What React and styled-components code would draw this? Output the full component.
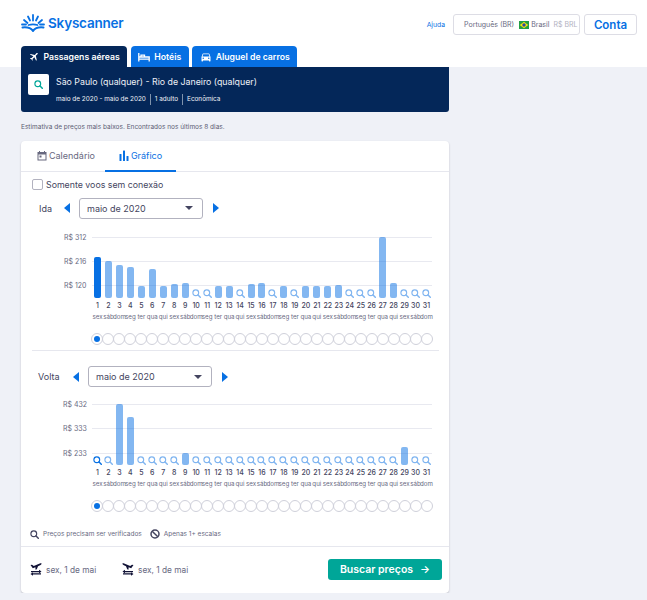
import React from 'react';
import styled, { createGlobalStyle } from 'styled-components';
import { MdDirectionsCar, MdFlight } from 'react-icons/md';

const Global = createGlobalStyle`
  html, body { margin: 0; padding: 0; background: #eff1f7; }
  body { font-family: Inter, "Noto Sans", sans-serif; color: #444560; overflow: hidden; }
  * { box-sizing: border-box; }
`;

const Header = styled.header`
  background: #fff;
  height: 67px;
  padding: 13px 10px 0 21px;
`;

const TopRow = styled.div`
  display: flex;
  align-items: flex-start;
  justify-content: space-between;
  height: 33px;
`;

const Logo = styled.div`
  display: flex;
  align-items: center;
  gap: 3px;
  height: 20px;
  color: #0770e3;
  font-size: 13.5px;
  font-weight: 600;
  letter-spacing: -0.2px;
`;

const TopActions = styled.div`
  display: flex;
  align-items: center;
  margin-top: 1px;
`;

const Help = styled.a`
  color: #0770e3;
  font-size: 6.8px;
  margin-right: 8px;
`;

const LocaleButton = styled.div`
  display: flex;
  align-items: center;
  width: 127px;
  height: 21px;
  padding-left: 10px;
  border: 1px solid #dddde5;
  border-radius: 3px;
  font-size: 7px;
  color: #68697f;
  margin-right: 4px;
  white-space: nowrap;
  span { margin-right: 5px; }
  em { font-style: normal; color: #b2b2bf; margin-left: 4px; }
  svg { margin-right: 2px; flex: none; }
`;

const AccountButton = styled.div`
  display: flex;
  align-items: center;
  justify-content: center;
  width: 53px;
  height: 21px;
  border: 1px solid #dddde5;
  border-radius: 3px;
  color: #0770e3;
  font-size: 11.5px;
  font-weight: 600;
`;

const Tabs = styled.nav`
  display: flex;
  gap: 3.5px;
`;

const Tab = styled.div`
  display: flex;
  align-items: center;
  gap: 4px;
  height: 21px;
  padding: 0 7.5px;
  border-radius: 4px 4px 0 0;
  background: ${p => (p.$active ? '#042759' : '#0770e3')};
  color: #fff;
  font-size: 8.7px;
  font-weight: 600;
  white-space: nowrap;
  svg { flex: none; }
`;

const PlaneIcon = styled(MdFlight)`
  transform: rotate(45deg);
`;

const Main = styled.main`
  width: 428px;
  margin-left: 21px;
`;

const Banner = styled.section`
  display: flex;
  gap: 7px;
  height: 45px;
  padding: 7px;
  background: #042759;
  border-radius: 0 0 3px 3px;
  color: #fff;
`;

const SearchBox = styled.div`
  display: flex;
  align-items: center;
  justify-content: center;
  width: 21px;
  height: 21px;
  background: #fff;
  border-radius: 2px;
  color: #00a698;
`;

const Route = styled.div`
  margin-top: 1px;
  font-size: 8.8px;
  line-height: 14px;
  color: #eef0f6;
  white-space: nowrap;
`;

const Meta = styled.div`
  display: flex;
  margin-top: 5px;
  font-size: 6.4px;
  line-height: 11px;
  color: #f1f3f8;
  white-space: nowrap;
  span + span { margin-left: 4px; padding-left: 4px; border-left: 1px solid #7f93ac; }
`;

const Note = styled.p`
  margin: 11px 0 9px;
  font-size: 6.5px;
  line-height: 9px;
  color: #5b5c73;
`;

const Card = styled.section`
  height: 452px;
  background: #fff;
  border-radius: 4px;
  box-shadow: 0 1px 2px rgba(37, 32, 51, 0.25);
`;

const CardTabs = styled.div`
  display: flex;
  height: 31px;
  padding-left: 6px;
  border-bottom: 1px solid #e6e7ee;
`;

const CardTab = styled.div`
  display: flex;
  align-items: center;
  justify-content: center;
  gap: 2px;
  width: ${p => p.$width}px;
  margin-bottom: -1px;
  font-size: 9px;
  color: ${p => (p.$active ? '#0770e3' : '#68697f')};
  border-bottom: 2px solid ${p => (p.$active ? '#0770e3' : 'transparent')};
`;

const CheckRow = styled.label`
  display: flex;
  align-items: center;
  gap: 3px;
  margin: 7px 0 0 11px;
  font-size: 8.8px;
  line-height: 11px;
  color: #444560;
`;

const CheckBox = styled.span`
  width: 11px;
  height: 11px;
  border: 1px solid #b2b2bf;
  border-radius: 2px;
`;

const MonthRow = styled.div`
  display: flex;
  align-items: center;
  margin-top: ${p => p.$top}px;
  padding-left: ${p => p.$left}px;
  height: 22px;
  font-size: 9px;
  color: #444560;
`;

const MonthLabel = styled.span`
  width: ${p => p.$width}px;
`;

const Arrow = styled.span`
  width: 0;
  height: 0;
  border-top: 5.5px solid transparent;
  border-bottom: 5.5px solid transparent;
  ${p => (p.$right
    ? 'border-left: 6px solid #0770e3; margin-left: 10px;'
    : 'border-right: 6px solid #0770e3; margin-right: 9px;')}
`;

const Select = styled.div`
  display: flex;
  align-items: center;
  justify-content: space-between;
  width: 124px;
  height: 21px;
  padding: 0 9px 0 7px;
  border: 1px solid #b2b2bf;
  border-radius: 3px;
  font-size: 9px;
  &::after {
    content: '';
    border-top: 4px solid #444560;
    border-left: 4.5px solid transparent;
    border-right: 4.5px solid transparent;
  }
`;

const Plot = styled.div`
  position: relative;
  margin: ${p => p.$top}px 0 0 ${p => p.$left}px;
  width: ${p => 411 - p.$left}px;
`;

const AxisRow = styled.div`
  display: flex;
  align-items: center;
  height: ${p => p.$height}px;
  font-size: 7px;
  color: #68697f;
  white-space: nowrap;
  &::after {
    content: '';
    position: absolute;
    left: ${p => p.$lineLeft}px;
    right: 0;
    height: 1px;
    background: #e8e9f0;
  }
`;

const Columns = styled.div`
  display: grid;
  grid-template-columns: repeat(31, minmax(0, 1fr));
  width: 340px;
`;

const BarLayer = styled(Columns)`
  position: absolute;
  left: ${p => p.$left}px;
  top: 0;
  bottom: 0;
  align-items: end;
  justify-items: center;
`;

const Bar = styled.div`
  width: 7px;
  height: ${p => p.$height}px;
  border-radius: 2px;
  background: ${p => (p.$selected ? '#0770e3' : 'rgba(7, 112, 227, 0.5)')};
`;

const Probe = styled.span`
  display: block;
  height: 9px;
  color: ${p => (p.$selected ? '#0770e3' : '#80b5f0')};
  svg { display: block; }
`;

const DayColumns = styled(Columns)`
  margin: ${p => p.$top}px 0 0 71px;
`;

const DayNumber = styled.span`
  text-align: center;
  font-size: 7px;
  line-height: 9px;
  font-weight: 500;
  color: #444560;
`;

const DayName = styled.span`
  display: flex;
  justify-content: center;
  font-size: 6.2px;
  line-height: 9px;
  color: #68697f;
  white-space: nowrap;
`;

const Radios = styled(Columns)`
  margin: ${p => p.$top}px 0 0 71px;
  justify-items: center;
`;

const Radio = styled.span`
  display: flex;
  align-items: center;
  justify-content: center;
  width: 12px;
  height: 12px;
  margin: 0 -1px;
  border: 1px solid #cfd0da;
  border-radius: 50%;
  background: #fff;
  &::after {
    content: '';
    display: ${p => (p.$selected ? 'block' : 'none')};
    width: 6px;
    height: 6px;
    border-radius: 50%;
    background: #0770e3;
  }
`;

const Divider = styled.hr`
  margin: ${p => p.$top}px 10px 0 11px;
  border: 0;
  border-top: 1px solid #e6e7ee;
`;

const Legend = styled.div`
  display: flex;
  align-items: center;
  height: 12px;
  margin: 16px 0 0 9px;
  font-size: 6.5px;
  color: #68697f;
  white-space: nowrap;
  svg { color: #444560; flex: none; }
`;

const LegendItem = styled.span`
  display: flex;
  align-items: center;
  gap: 4px;
  margin-right: 8px;
`;

const FooterRow = styled.div`
  display: flex;
  align-items: center;
  height: 46px;
  margin-top: 6px;
  padding: 0 7px 0 9px;
  border-top: 1px solid #e6e7ee;
`;

const Leg = styled.span`
  display: flex;
  align-items: center;
  gap: 4px;
  width: 92px;
  font-size: 8.3px;
  color: #68697f;
  white-space: nowrap;
`;

const SearchButton = styled.button`
  display: flex;
  align-items: center;
  justify-content: center;
  gap: 7px;
  width: 114px;
  height: 21px;
  margin-left: auto;
  border: 0;
  border-radius: 3px;
  background: #00a698;
  color: #fff;
  font: 600 10.5px Inter, sans-serif;
`;

const LogoMark = () => (
  <svg width="24" height="18" viewBox="0 0 24 18" fill="none" stroke="#0770e3" strokeWidth="1.8" strokeLinecap="round">
    <path d="M12 1v5.500M7 2.500l2 4M17 2.500l-2 4M3 6l3.500 3M21 6l-3.500 3" />
    <path d="M1 10.500h4M23 10.500h-4" />
    <path d="M1.500 13.500c4.500-.5 8 0 10.500 3.500 2.500-3.500 6-4 10.500-3.500" strokeWidth="2" />
    <path d="M7.500 11c2.500-.8 6.500-.8 9 0" />
  </svg>
);

const Flag = () => (
  <svg width="10" height="8" viewBox="0 0 10 8">
    <rect width="10" height="8" fill="#229e45" />
    <path d="M5 .8 9.200 4 5 7.200.8 4z" fill="#f8e509" />
    <circle cx="5" cy="4" r="1.700" fill="#2b49a3" />
  </svg>
);

const Magnifier = ({ size = 9, width = 1.3 }) => (
  <svg width={size} height={size} viewBox="0 0 10 10" fill="none" stroke="currentColor" strokeWidth={width} strokeLinecap="round">
    <circle cx="4.200" cy="4.200" r="3.200" />
    <path d="M6.700 6.700 9.200 9.200" strokeWidth={width + 0.3} />
  </svg>
);

const BanIcon = () => (
  <svg width="10" height="10" viewBox="0 0 10 10" fill="none" stroke="currentColor" strokeWidth="1.500">
    <circle cx="5" cy="5" r="4" />
    <path d="M2.200 2.200l5.600 5.600" />
  </svg>
);

const BedIcon = () => (
  <svg width="12" height="10" viewBox="0 0 12 10" fill="none" stroke="#fff" strokeWidth="1.300">
    <path d="M.8 1v8.500M.8 7.200h10.400v2.300M.8 5h10.400v2M3 5V3.200h3.500V5" />
  </svg>
);

const CalendarIcon = () => (
  <svg width="10" height="10" viewBox="0 0 10 10" fill="#68697f">
    <path d="M2 0h1v1h4V0h1v1h1.500v8.500H.5V1H2zM1.500 3.500v5h7v-5z" />
    <rect x="2.500" y="4.500" width="2" height="2" />
  </svg>
);

const ChartIcon = () => (
  <svg width="10" height="11" viewBox="0 0 10 11" fill="#0770e3">
    <rect x="0.500" y="4" width="2" height="7" rx="0.500" />
    <rect x="4" y="0.500" width="2" height="10.500" rx="0.500" />
    <rect x="7.500" y="6" width="2" height="5" rx="0.500" />
  </svg>
);

const FlightPairSvg = styled.svg`
  flex: none;
  transform: ${p => (p.$flip ? 'scaleX(-1)' : 'none')};
`;

const FlightPair = ({ flip }) => (
  <FlightPairSvg $flip={flip} width="12" height="13" viewBox="0 0 12 13" fill="#111236">
    <path d="M.5 2 2 1.700 3.800 3 9.800.5c.9-.3 1.700-.2 1.800.3.100.4-.3.8-1 1.200L8 3.300 6.800 6.300 5.500 6.700 5.400 4.300 2.800 5.200z" />
    <path d="M1 8h8V6.800L11.500 8.600 9 10.400V9.200H1z" />
    <path d="M11 10.200H3V9.200L.5 10.900 3 12.700v-1.200h8z" />
  </FlightPairSvg>
);

const outbound = [41, 37, 33, 31, 12, 29, 12, 13.5, 14.5, null, null, 12, 12, null, 14, 15, null, 12, null, 12, 12, 12, 13, null, null, null, 61, 14.5, null, null, null];
const inbound = Array.from({ length: 31 }, () => null);
inbound[2] = 61;
inbound[3] = 48;
inbound[8] = 12;
inbound[28] = 18;

const weekdays = ['sex', 'sáb', 'dom', 'seg', 'ter', 'qua', 'qui'];

const PriceChart = ({ labels, bars, left, top, rowHeight }) => (
  <>
    <Plot $left={left} $top={top}>
      {labels.map(label => (
        <AxisRow key={label} $height={rowHeight} $lineLeft={71 - left}>{label}</AxisRow>
      ))}
      <BarLayer $left={71 - left}>
        {bars.map((h, i) => (h === null
          ? <Probe key={i} $selected={i === 0}><Magnifier /></Probe>
          : <Bar key={i} $height={h} $selected={i === 0} />))}
      </BarLayer>
    </Plot>
    <DayColumns $top={3}>
      {bars.map((_, i) => <DayNumber key={i}>{i + 1}</DayNumber>)}
    </DayColumns>
    <DayColumns $top={2}>
      {bars.map((_, i) => <DayName key={i}>{weekdays[i % 7]}</DayName>)}
    </DayColumns>
    <Radios $top={12}>
      {bars.map((_, i) => <Radio key={i} $selected={i === 0} />)}
    </Radios>
  </>
);

export default function App() {
  return (
    <>
      <Global />
      <Header>
        <TopRow>
          <Logo><LogoMark />Skyscanner</Logo>
          <TopActions>
            <Help>Ajuda</Help>
            <LocaleButton>
              <span>Português (BR)</span><Flag />Brasil<em>R$ BRL</em>
            </LocaleButton>
            <AccountButton>Conta</AccountButton>
          </TopActions>
        </TopRow>
        <Tabs>
          <Tab $active><PlaneIcon size={11} />Passagens aéreas</Tab>
          <Tab><BedIcon />Hotéis</Tab>
          <Tab><MdDirectionsCar size={12} />Aluguel de carros</Tab>
        </Tabs>
      </Header>
      <Main>
        <Banner>
          <SearchBox><Magnifier size={9} /></SearchBox>
          <div>
            <Route>São Paulo (qualquer) - Rio de Janeiro (qualquer)</Route>
            <Meta>
              <span>maio de 2020 - maio de 2020</span>
              <span>1 adulto</span>
              <span>Econômica</span>
            </Meta>
          </div>
        </Banner>
        <Note>Estimativa de preços mais baixos. Encontrados nos últimos 8 dias.</Note>
        <Card>
          <CardTabs>
            <CardTab $width={78}><CalendarIcon />Calendário</CardTab>
            <CardTab $width={71} $active><ChartIcon />Gráfico</CardTab>
          </CardTabs>
          <CheckRow><CheckBox />Somente voos sem conexão</CheckRow>
          <MonthRow $top={7} $left={18}>
            <MonthLabel $width={25}>Ida</MonthLabel>
            <Arrow />
            <Select>maio de 2020</Select>
            <Arrow $right />
          </MonthRow>
          <PriceChart
            labels={['R$ 312', 'R$ 216', 'R$ 120']}
            bars={outbound}
            left={43}
            top={6}
            rowHeight={24.3}
          />
          <Divider $top={5} />
          <MonthRow $top={15} $left={17}>
            <MonthLabel $width={35}>Volta</MonthLabel>
            <Arrow />
            <Select>maio de 2020</Select>
            <Arrow $right />
          </MonthRow>
          <PriceChart
            labels={['R$ 432', 'R$ 333', 'R$ 233']}
            bars={inbound}
            left={42}
            top={4}
            rowHeight={24.5}
          />
          <Legend>
            <LegendItem><Magnifier size={9} />Preços precisam ser verificados</LegendItem>
            <LegendItem><BanIcon />Apenas 1+ escalas</LegendItem>
          </Legend>
          <FooterRow>
            <Leg><FlightPair />sex, 1 de mai</Leg>
            <Leg><FlightPair flip />sex, 1 de mai</Leg>
            <SearchButton>Buscar preços <span>→</span></SearchButton>
          </FooterRow>
        </Card>
      </Main>
    </>
  );
}
